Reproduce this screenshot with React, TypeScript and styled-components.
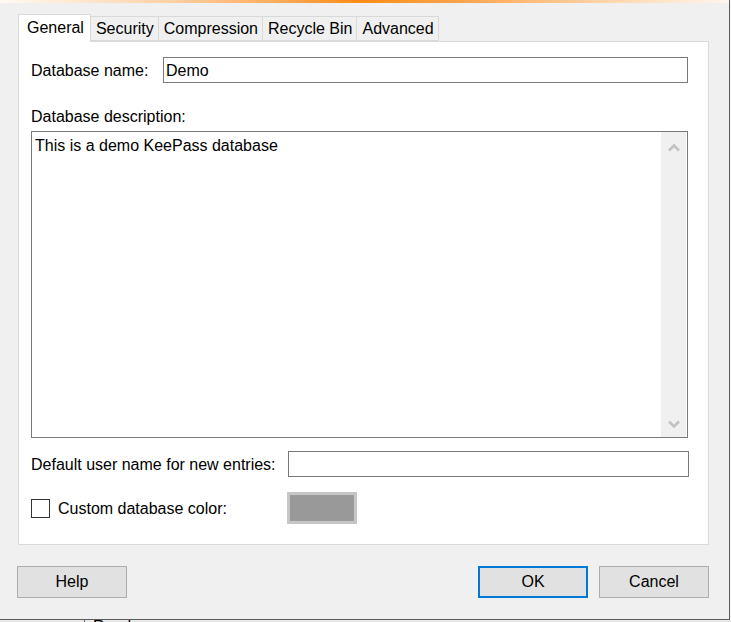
import React, { useState } from "react";
import styled, { createGlobalStyle } from "styled-components";

const tabs = ["General", "Security", "Compression", "Recycle Bin", "Advanced"];

const GlobalStyle = createGlobalStyle`
  html, body {
    margin: 0;
    padding: 0;
    background: #f0f0f0;
  }
  body {
    font-family: "Liberation Sans", Arial, sans-serif;
    font-size: 16px;
    color: #000;
  }
`;

const Chevron = ({ down }: { down?: boolean }) => (
  <svg width="12" height="8" viewBox="0 0 12 8">
    <polyline
      points={down ? "1,1.5 6,6.5 11,1.5" : "1,6.5 6,1.5 11,6.5"}
      fill="none"
      stroke="#c2c2c2"
      strokeWidth="2.6"
    />
  </svg>
);

export const App = () => {
  const [active, setActive] = useState("General");
  const [name, setName] = useState("Demo");
  const [desc, setDesc] = useState("This is a demo KeePass database");
  const [user, setUser] = useState("");
  const [custom, setCustom] = useState(false);

  return (
    <PageStyled>
      <GlobalStyle />
      <WindowStyled>
        <TitleStripStyled />
        <BodyStyled>
          <TabRowStyled>
            {tabs.map((tab) => (
              <TabStyled
                key={tab}
                $active={tab === active}
                onClick={() => setActive(tab)}
              >
                {tab}
              </TabStyled>
            ))}
          </TabRowStyled>
          <PanelStyled>
            <FieldRowStyled>
              <LabelStyled $width={132}>Database name:</LabelStyled>
              <InputStyled
                value={name}
                onChange={(e) => setName(e.target.value)}
              />
            </FieldRowStyled>
            <CaptionStyled>Database description:</CaptionStyled>
            <MemoStyled>
              <MemoTextStyled
                value={desc}
                onChange={(e) => setDesc(e.target.value)}
              />
              <ScrollTrackStyled>
                <Chevron />
                <Chevron down />
              </ScrollTrackStyled>
            </MemoStyled>
            <FieldRowStyled $gap={13}>
              <LabelStyled $width={257}>
                Default user name for new entries:
              </LabelStyled>
              <InputStyled
                $right={18}
                value={user}
                onChange={(e) => setUser(e.target.value)}
              />
            </FieldRowStyled>
            <ColorRowStyled>
              <CheckBoxStyled
                $checked={custom}
                onClick={() => setCustom(!custom)}
              />
              <LabelStyled $width={229}>Custom database color:</LabelStyled>
              <ColorButtonStyled />
            </ColorRowStyled>
          </PanelStyled>
        </BodyStyled>
        <FooterStyled>
          <ButtonStyled>Help</ButtonStyled>
          <FooterRightStyled>
            <ButtonStyled $default>OK</ButtonStyled>
            <ButtonStyled>Cancel</ButtonStyled>
          </FooterRightStyled>
        </FooterStyled>
      </WindowStyled>
      <StatusBarStyled>
        <StatusCellStyled />
        <StatusTextStyled>Ready</StatusTextStyled>
      </StatusBarStyled>
    </PageStyled>
  );
};

export default App;

const PageStyled = styled.div`
  width: 731px;
  height: 622px;
  overflow: hidden;
  background: #f4f4f4;
`;

const WindowStyled = styled.div`
  width: 729px;
  height: 619px;
  display: flex;
  flex-direction: column;
  background: #f0f0f0;
  border-right: 1px solid #5c5c5c;
  border-bottom: 1px solid #5c5c5c;
`;

const TitleStripStyled = styled.div`
  height: 3px;
  background: linear-gradient(
    90deg,
    #fffaf4 0%,
    #ffd3aa 22%,
    #ffab5c 38%,
    #ff8c17 49%,
    #ffa650 64%,
    #ffd2a6 82%,
    #fff6ee 100%
  );
`;

const BodyStyled = styled.div`
  padding: 11px 20px 0 18px;
  display: flex;
  flex-direction: column;
`;

const TabRowStyled = styled.div`
  display: flex;
  align-items: flex-end;
  height: 27px;
`;

const TabStyled = styled.div<{ $active?: boolean }>`
  box-sizing: border-box;
  display: flex;
  align-items: center;
  height: ${(p) => (p.$active ? "28px" : "25px")};
  padding: ${(p) => (p.$active ? "0 6px 2px 8px" : "0 4px 0 5px")};
  margin-bottom: ${(p) => (p.$active ? "-1px" : "0")};
  margin-left: ${(p) => (p.$active ? "0" : "-1px")};
  border: 1px solid #d9d9d9;
  border-bottom: ${(p) => (p.$active ? "none" : "1px solid #d9d9d9")};
  background: ${(p) => (p.$active ? "#fff" : "#f0f0f0")};
  position: relative;
  z-index: ${(p) => (p.$active ? 2 : 1)};
  line-height: 18px;
  white-space: nowrap;
  cursor: default;

  &:first-child {
    margin-left: 0;
  }
`;

const PanelStyled = styled.div`
  box-sizing: border-box;
  height: 504px;
  background: #fff;
  border: 1px solid #d9d9d9;
  padding: 15px 20px 0 12px;
  display: flex;
  flex-direction: column;
`;

const FieldRowStyled = styled.div<{ $gap?: number }>`
  display: flex;
  align-items: center;
  height: 26px;
  margin-top: ${(p) => (p.$gap ? `${p.$gap}px` : "0")};
`;

const LabelStyled = styled.span<{ $width: number }>`
  flex: 0 0 ${(p) => p.$width}px;
  line-height: 18px;
  padding-top: 1px;
  white-space: nowrap;
`;

const InputStyled = styled.input<{ $right?: number }>`
  box-sizing: border-box;
  flex: 1;
  height: 26px;
  margin-right: -${(p) => (p.$right ? 1 : 0)}px;
  border: 1px solid #7a7a7a;
  padding: 1px 2px 0;
  font: inherit;
  line-height: 18px;
  outline: none;
  background: #fff;
`;

const CaptionStyled = styled.div`
  margin-top: 25px;
  line-height: 18px;
`;

const MemoStyled = styled.div`
  box-sizing: border-box;
  margin-top: 5px;
  height: 307px;
  border: 1px solid #7a7a7a;
  display: flex;
  background: #fff;
`;

const MemoTextStyled = styled.textarea`
  flex: 1;
  border: none;
  resize: none;
  outline: none;
  font: inherit;
  line-height: 18px;
  padding: 5px 3px 2px;
  margin: 0;
  overflow: hidden;
`;

const ScrollTrackStyled = styled.div`
  box-sizing: border-box;
  width: 25px;
  margin-right: 1px;
  background: #f0f0f0;
  display: flex;
  flex-direction: column;
  align-items: center;
  justify-content: space-between;
  padding: 12px 0 9px;
`;

const ColorRowStyled = styled.div`
  display: flex;
  align-items: center;
  height: 32px;
  margin-top: 15px;
`;

const CheckBoxStyled = styled.div<{ $checked?: boolean }>`
  box-sizing: border-box;
  width: 19px;
  height: 19px;
  border: 1px solid #333;
  background: ${(p) => (p.$checked ? "#cce4f7" : "#fff")};
  margin-right: 8px;
`;

const ColorButtonStyled = styled.div`
  box-sizing: border-box;
  width: 70px;
  height: 32px;
  border: 3px solid #c6c6c6;
  background: #999999;
`;

const FooterStyled = styled.div`
  display: flex;
  justify-content: space-between;
  padding: 21px 20px 0 17px;
`;

const FooterRightStyled = styled.div`
  display: flex;
  gap: 11px;
`;

const ButtonStyled = styled.button<{ $default?: boolean }>`
  box-sizing: border-box;
  width: 110px;
  height: 32px;
  background: #e1e1e1;
  border: ${(p) => (p.$default ? "2px solid #0078d7" : "1px solid #adadad")};
  font: inherit;
  color: #000;
  padding: 0;
`;

const StatusBarStyled = styled.div`
  display: flex;
  height: 20px;
  background: #e8e8e8;
`;

const StatusCellStyled = styled.div`
  width: 84px;
  border-right: 1px solid #6d6d6d;
`;

const StatusTextStyled = styled.span`
  padding-left: 8px;
  line-height: 13px;
`;
